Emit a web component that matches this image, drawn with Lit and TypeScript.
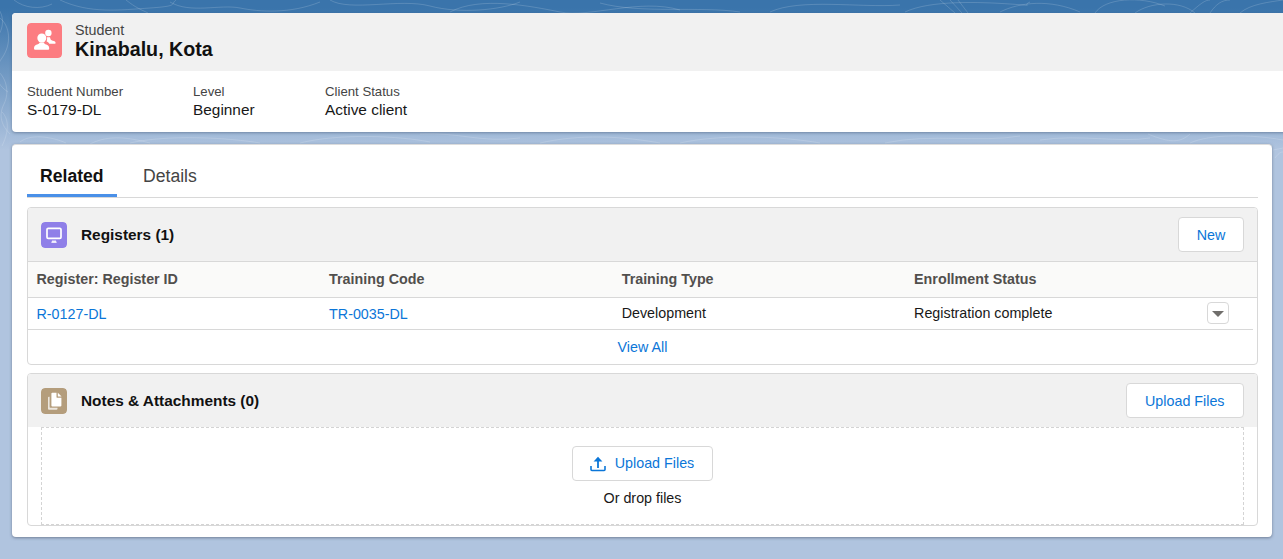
import { LitElement, html, css, svg } from 'lit';
import { customElement } from 'lit/decorators.js';

const CONTOURS = [
  'M-6 4C6 14 4 30 -4 38',
  'M0 18C10 26 12 44 2 58S-4 84 8 92',
  'M-4 70C6 76 10 92 4 104S2 126 10 134',
  'M2 112C10 120 8 134 2 146',
  'M14 0C24 8 40 10 52 4',
  'M60 0C90 14 120 10 150 8S170 4 176 0',
  'M126 0C136 8 142 10 148 13',
  'M170 2C190 14 220 4 240 8S290 14 320 2',
  'M330 0C350 12 400 -2 430 6S500 10 520 2',
  'M450 12C480 -4 530 6 560 12S640 -2 680 10',
  'M600 3C640 14 700 6 740 12',
  'M770 12C800 -2 860 8 900 5',
  'M905 12C930 0 980 2 1010 4S1020 6 1030 2',
  'M940 0L955 13M950 0L962 13M958 0L968 13',
  'M1000 12C1020 2 1050 -1 1080 12',
  'M1095 13C1105 -2 1140 -4 1165 6',
  'M1135 13C1150 2 1180 0 1195 13',
  'M1190 13C1200 4 1205 0 1210 0M1210 13C1216 4 1222 0 1230 0',
  'M1240 13C1250 4 1270 2 1283 0',
  'M20 142C30 134 50 136 66 143',
  'M90 144C110 134 130 138 150 143',
  'M130 143C170 134 230 138 260 143',
  'M300 143C340 133 400 136 430 142',
  'M420 134C460 132 480 143 520 138',
  'M540 143C580 134 620 136 660 143',
  'M680 143C720 134 780 136 820 143',
  'M885 143C930 133 980 143 1020 136',
  'M1040 140C1080 134 1120 143 1150 138',
  'M1148 134C1170 143 1180 143 1190 134',
  'M1190 143C1210 134 1250 134 1283 140',
  'M1273 150L1283 148M1275 158C1278 154 1280 152 1283 152',
];

@customElement('app-root')
export class AppRoot extends LitElement {
  static styles = css`
    :host {
      display: block;
      position: relative;
      width: 1283px;
      height: 559px;
      overflow: hidden;
      box-sizing: border-box;
      padding: 13px 0 0 12px;
      font-family: 'Liberation Sans', Arial, sans-serif;
      font-size: 14.3px;
      color: #181818;
      background: linear-gradient(#3a74ab 0, #3a74ab 8px, #b0c4df 150px);
    }
    .contours {
      position: absolute;
      top: 0;
      left: 0;
    }
    .contours path {
      fill: none;
      stroke: #fff;
      stroke-opacity: 0.16;
    }
    .highlights {
      position: relative;
      width: 1290px;
      height: 119px;
      border-radius: 4px;
      background: #fff;
      box-shadow: 0 1px 3px rgba(50, 70, 100, 0.45);
      overflow: hidden;
    }
    .title-bar {
      display: flex;
      align-items: flex-start;
      gap: 13px;
      box-sizing: border-box;
      height: 58px;
      padding: 10px 15px 0;
      background: #f1f1f1;
    }
    .app-icon {
      display: block;
      flex: none;
      width: 35px;
      height: 35px;
      border-radius: 4px;
    }
    .title-text {
      margin-top: -1px;
    }
    .kind {
      line-height: 16px;
      color: #444;
    }
    .name {
      font-size: 19.7px;
      font-weight: 700;
      line-height: 22px;
      color: #111;
    }
    .fields {
      display: grid;
      grid-template-columns: 166px 132px auto;
      justify-content: start;
      padding: 12px 15px 0;
    }
    .field-label {
      font-size: 13.2px;
      line-height: 18px;
      color: #444;
    }
    .field-value {
      margin-top: -1px;
      font-size: 15.4px;
      line-height: 19px;
    }
    .main {
      position: relative;
      box-sizing: border-box;
      width: 1260px;
      height: 393px;
      margin-top: 12px;
      padding: 10px 14px 0 15px;
      background: #fff;
      border-radius: 4px;
      border-top: 1px solid #dcdcdc;
      box-shadow: 0 1px 3px rgba(50, 60, 80, 0.5);
    }
    .tabs {
      display: flex;
      height: 43px;
      box-sizing: border-box;
      border-bottom: 1px solid #d8d8d8;
    }
    .tab {
      height: 42px;
      padding: 0 13px;
      font-size: 17.6px;
      line-height: 43px;
      color: #444;
    }
    .tab.active {
      box-sizing: border-box;
      width: 90px;
      font-weight: 700;
      color: #111;
      border-bottom: 3px solid #4a90e8;
    }
    .tab.active + .tab {
      margin-left: 13px;
    }
    .card {
      box-sizing: border-box;
      border: 1px solid #d8d8d8;
      border-radius: 4px;
      background: #fff;
      overflow: hidden;
    }
    .card.registers {
      height: 158px;
      margin-top: 9px;
    }
    .card.notes {
      height: 153px;
      margin-top: 8px;
    }
    .card-head {
      display: flex;
      align-items: center;
      box-sizing: border-box;
      height: 54px;
      padding: 0 13px;
      background: #f1f1f1;
    }
    .registers .card-head {
      border-bottom: 1px solid #d8d8d8;
    }
    .notes .card-head {
      height: 53px;
    }
    .card-icon {
      display: block;
      flex: none;
      width: 26px;
      height: 26px;
      border-radius: 4px;
    }
    .card-title {
      flex: 1;
      margin-left: 14px;
      font-size: 15.4px;
      font-weight: 700;
      color: #111;
    }
    .btn {
      box-sizing: border-box;
      height: 35px;
      padding: 0 18.5px;
      line-height: 34px;
      color: #0b76d8;
      background: #fff;
      border: 1px solid #d8d8d8;
      border-radius: 4px;
    }
    .btn.new {
      width: 66px;
      padding: 0;
      text-align: center;
    }
    .table-row {
      display: grid;
      grid-template-columns: 292.6px 292.6px 292.4px 1fr;
      align-items: center;
      box-sizing: border-box;
      padding-left: 8.5px;
      margin-right: 4px;
    }
    .table-head {
      height: 36px;
      margin-right: 0;
      padding-bottom: 2px;
      background: #fafaf9;
      border-bottom: 1px solid #d8d8d8;
      font-weight: 700;
      color: #514f4d;
    }
    .table-body {
      position: relative;
      height: 32px;
      padding-bottom: 1px;
      border-bottom: 1px solid #d8d8d8;
    }
    .link {
      padding-top: 1px;
      color: #0b76d8;
    }
    .row-menu {
      position: absolute;
      top: 4px;
      right: 24px;
      display: flex;
      align-items: center;
      justify-content: center;
      box-sizing: border-box;
      width: 22px;
      height: 22px;
      border: 1px solid #d8d8d8;
      border-radius: 4px;
      background: #fff;
    }
    .caret {
      width: 0;
      height: 0;
      margin-top: 2px;
      border-left: 6px solid transparent;
      border-right: 6px solid transparent;
      border-top: 6px solid #706e6b;
    }
    .view-all {
      height: 34px;
      line-height: 34px;
      text-align: center;
      color: #0b76d8;
    }
    .drop {
      display: flex;
      flex-direction: column;
      align-items: center;
      box-sizing: border-box;
      height: 98px;
      margin: 0 13px;
      padding-top: 18px;
      border: 1px dashed #d4d4d4;
    }
    .btn.upload {
      display: flex;
      align-items: center;
      gap: 9px;
      padding: 0 18px 0 17px;
      line-height: 33px;
    }
    .upload-icon {
      display: block;
      width: 16px;
      height: 16px;
    }
    .drop-text {
      margin-top: 9px;
      line-height: 16px;
    }
  `;

  render() {
    return html`
      <svg class="contours" width="1283" height="170" viewBox="0 0 1283 170">
        ${CONTOURS.map((d) => svg`<path d=${d}></path>`)}
      </svg>
      <section class="highlights">
        <div class="title-bar">
          <svg class="app-icon" viewBox="0 0 35 35">
            <rect width="35" height="35" rx="4" fill="#fc7c81"></rect>
            <circle cx="21.4" cy="10" r="3.2" fill="#fff"></circle>
            <path fill="#fff" d="M20 14.2h3c.4 1.4.4 2.4 1.6 3 1.3.6 3.6.8 3.9 2 .2.9 0 1.6-1 1.6h-5.2c-.4-1.2-1.8-2-2.8-2.5.7-1.2.7-2.6.5-4.1z"></path>
            <circle cx="14.8" cy="15" r="4.5" fill="#fff"></circle>
            <path fill="#fff" d="M12.6 19.4h4.4c.2 1.2.8 1.7 2.2 2.2 1.6.6 3 1.3 3 3.6 0 1-.5 1.6-1.5 1.6H8.6c-1 0-1.6-.6-1.6-1.6 0-2.2 1.4-3 3-3.6 1.4-.5 2.3-1 2.6-2.2z"></path>
          </svg>
          <div class="title-text">
            <div class="kind">Student</div>
            <div class="name">Kinabalu, Kota</div>
          </div>
        </div>
        <div class="fields">
          <div>
            <div class="field-label">Student Number</div>
            <div class="field-value">S-0179-DL</div>
          </div>
          <div>
            <div class="field-label">Level</div>
            <div class="field-value">Beginner</div>
          </div>
          <div>
            <div class="field-label">Client Status</div>
            <div class="field-value">Active client</div>
          </div>
        </div>
      </section>
      <section class="main">
        <div class="tabs">
          <div class="tab active">Related</div>
          <div class="tab">Details</div>
        </div>
        <div class="card registers">
          <div class="card-head">
            <svg class="card-icon" viewBox="0 0 26 26">
              <rect width="26" height="26" rx="4" fill="#8f7fe8"></rect>
              <rect x="6" y="6.4" width="14" height="10" rx="1.2" fill="none" stroke="#fff" stroke-width="1.7"></rect>
              <rect x="11" y="18.6" width="4" height="1.2" fill="#fff"></rect>
              <rect x="10.4" y="19.6" width="5.2" height="1.2" fill="#fff"></rect>
            </svg>
            <div class="card-title">Registers (1)</div>
            <div class="btn new">New</div>
          </div>
          <div class="table-row table-head">
            <div>Register: Register ID</div>
            <div>Training Code</div>
            <div>Training Type</div>
            <div>Enrollment Status</div>
          </div>
          <div class="table-row table-body">
            <div class="link">R-0127-DL</div>
            <div class="link">TR-0035-DL</div>
            <div>Development</div>
            <div>Registration complete</div>
            <div class="row-menu"><div class="caret"></div></div>
          </div>
          <div class="view-all">View All</div>
        </div>
        <div class="card notes">
          <div class="card-head">
            <svg class="card-icon" viewBox="0 0 26 26">
              <rect width="26" height="26" rx="4" fill="#b49d7c"></rect>
              <path fill="#fff" fill-opacity="0.75" d="M7 9.6c0-.5.4-.9.9-.9H8.6v10.2c0 .5.4.9.9.9h7v1c0 .5-.4.9-.9.9H7.9c-.5 0-.9-.4-.9-.9z"></path>
              <path fill="#fff" d="M10.4 5.6c0-.5.4-.9.9-.9h4.2v4.2c0 .5.4.9.9.9h4v7.8c0 .5-.4.9-.9.9h-8.2c-.5 0-.9-.4-.9-.9z"></path>
              <path fill="#fff" d="M16.8 4.8l3.8 3.8h-3.2c-.3 0-.6-.3-.6-.6z"></path>
            </svg>
            <div class="card-title">Notes &amp; Attachments (0)</div>
            <div class="btn">Upload Files</div>
          </div>
          <div class="drop">
            <div class="btn upload">
              <svg class="upload-icon" viewBox="0 0 16 16">
                <path fill="none" stroke="#0b76d8" stroke-width="1.6" d="M1 10v3.6c0 .5.4.9.9.9h12.2c.5 0 .9-.4.9-.9V10"></path>
                <path fill="none" stroke="#0b76d8" stroke-width="1.8" d="M8 12V3"></path>
                <path fill="#0b76d8" d="M8 .8l4.4 4.6H3.6z"></path>
              </svg>
              Upload Files
            </div>
            <div class="drop-text">Or drop files</div>
          </div>
        </div>
      </section>
    `;
  }
}
